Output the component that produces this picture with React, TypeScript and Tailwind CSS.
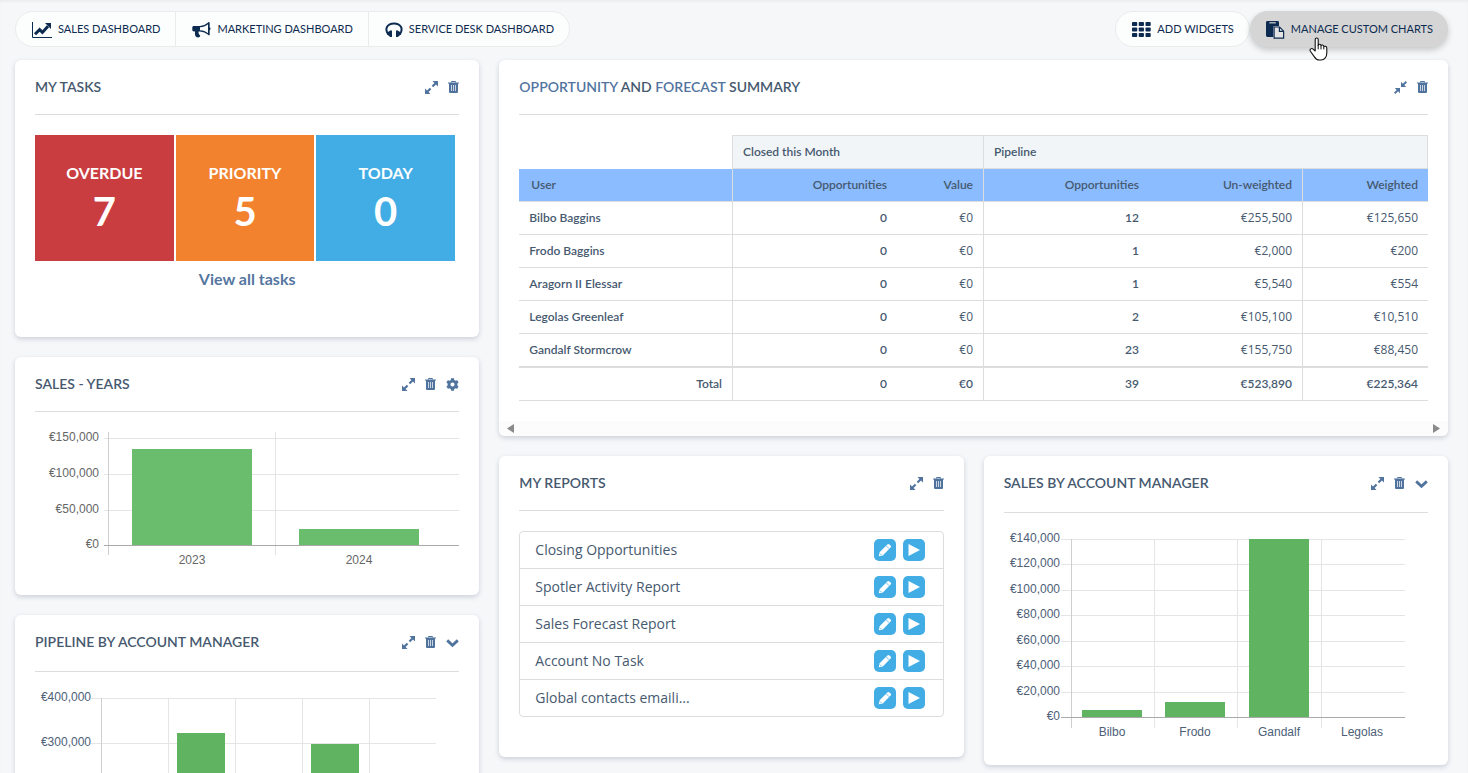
import { ReactNode } from "react"
import { FaCog } from "react-icons/fa"


const users = [
    { name: "Bilbo Baggins", closed: "0", value: "€0", open: "12", unweighted: "€255,500", weighted: "€125,650" },
    { name: "Frodo Baggins", closed: "0", value: "€0", open: "1", unweighted: "€2,000", weighted: "€200" },
    { name: "Aragorn II Elessar", closed: "0", value: "€0", open: "1", unweighted: "€5,540", weighted: "€554" },
    { name: "Legolas Greenleaf", closed: "0", value: "€0", open: "2", unweighted: "€105,100", weighted: "€10,510" },
    { name: "Gandalf Stormcrow", closed: "0", value: "€0", open: "23", unweighted: "€155,750", weighted: "€88,450" },
]

const reports = [
    "Closing Opportunities",
    "Spotler Activity Report",
    "Sales Forecast Report",
    "Account No Task",
    "Global contacts emaili...",
]

const tasks = [
    { label: "OVERDUE", count: 7, color: "bg-[#c93c3f]" },
    { label: "PRIORITY", count: 5, color: "bg-[#f2822e]" },
    { label: "TODAY", count: 0, color: "bg-[#42ade5]" },
]

function LineChartIcon() {
    return (
        <svg width="20" height="16" viewBox="0 0 20 16" fill="none" stroke="currentColor" aria-hidden="true">
            <path d="M.5 0V15.5H20" strokeWidth="1" />
            <path d="M3 12.3L7.6 7.6 10.4 10.4 16 4.2" strokeWidth="3" />
            <path d="M13 1H19V7z" fill="currentColor" stroke="none" />
        </svg>
    )
}

function BullhornIcon() {
    return (
        <svg width="19" height="16" viewBox="0 0 19 16" fill="currentColor" aria-hidden="true">
            <path d="M2 4H8V9.4H6.6C6.2 11 7 12.4 8.2 13.6 8.4 14.8 7.4 15.4 6.2 15.4 4.6 15.4 3.8 15 3.4 13.8 2.8 12 2.8 11 3.2 9.4H2C.8 9.4.3 8.8.3 7.8V5.6C.3 4.6.8 4 2 4z" />
            <path d="M8 4.6C11.4 4.4 14.4 3 16.6 1V12.4C14.4 10.4 11.4 9 8 8.8" fill="none" stroke="currentColor" strokeWidth="1.2" />
            <path d="M16 .4H17.6V5.2C18.8 5.6 18.8 7.8 17.6 8.2V13H16z" />
        </svg>
    )
}

function HeadphonesIcon() {
    return (
        <svg width="18" height="16" viewBox="0 0 18 16" fill="currentColor" aria-hidden="true">
            <path d="M3.2 12.4C-.8 6.8 2.4 1.5 9 1.5S18.8 6.8 14.8 12.4" fill="none" stroke="currentColor" strokeWidth="2" />
            <path d="M5.2 8.6H7V15H5.2L2.2 12.4V10.4z" />
            <path d="M12.8 8.6H11V15H12.8L15.8 12.4V10.4z" />
        </svg>
    )
}

function GridIcon() {
    return (
        <svg width="19" height="15" viewBox="0 0 19 15" fill="currentColor" aria-hidden="true">
            {[0, 5.5, 11].map((y) =>
                [0, 6.75, 13.5].map((x) => <rect key={`${x}-${y}`} x={x} y={y} width="5.2" height="4" rx=".8" />)
            )}
        </svg>
    )
}

function PasteIcon() {
    return (
        <svg width="19" height="18" viewBox="0 0 19 18" aria-hidden="true">
            <path d="M1.4 0H11.6Q13 0 13 1.4V5H8.4Q7.2 5 7.2 6.2V16H1.4Q0 16 0 14.6V1.4Q0 0 1.4 0z" fill="currentColor" />
            <path d="M3.4 1.2H9.8V2.4H3.4z" fill="#d5d5d5" />
            <path d="M8.1 6H13.6L17.6 10.2V17.2H8.1z" fill="#e4e4e4" stroke="currentColor" strokeWidth="1.2" />
            <path d="M13.4 6V10.4H17.6" fill="none" stroke="currentColor" strokeWidth="1.2" />
        </svg>
    )
}

function ExpandIcon() {
    return (
        <svg width="13" height="13" viewBox="0 0 13 13" fill="currentColor" aria-hidden="true">
            <path d="M7.5 0H13V5.5L11 3.6 8.2 6.3 6.7 4.8 9.4 2z" />
            <path d="M5.5 13H0V7.5L2 9.4 4.8 6.7 6.3 8.2 3.6 11z" />
        </svg>
    )
}

function CompressIcon() {
    return (
        <svg width="13" height="13" viewBox="0 0 13 13" fill="currentColor" aria-hidden="true">
            <path d="M7 .8V6H12.2L10.3 4.1 13 1.4 11.6 0 8.9 2.7z" />
            <path d="M6 12.2V7H.8L2.7 8.9 0 11.6 1.4 13 4.1 10.3z" />
        </svg>
    )
}

function TrashIcon() {
    return (
        <svg width="11" height="12" viewBox="0 0 11 12" aria-hidden="true">
            <path d="M3.5 1.5V.5H7.5V1.5" fill="none" stroke="currentColor" />
            <path d="M0 1.4H11V2.6H10V11Q10 12 9 12H2Q1 12 1 11V2.6H0z" fill="currentColor" />
            <path d="M3.5 4V10M5.5 4V10M7.5 4V10" stroke="#fff" strokeWidth="1" opacity=".7" />
        </svg>
    )
}

function ChevronIcon() {
    return (
        <svg width="13" height="13" viewBox="0 0 13 13" fill="none" stroke="currentColor" strokeWidth="2.8" aria-hidden="true">
            <path d="M1.2 4.4L6.5 9.3 11.8 4.4" />
        </svg>
    )
}

function PencilIcon() {
    return (
        <svg width="14" height="14" viewBox="0 0 14 14" fill="currentColor" aria-hidden="true">
            <path d="M.8 13.2L1.6 9.2 9.4 1.4Q10.4.4 11.4 1.4L12.6 2.6Q13.6 3.6 12.6 4.6L4.8 12.4z" />
            <path d="M8.2 2.8L11.2 5.8M2 10.6L3.4 12" stroke="#42ade5" strokeWidth=".8" />
        </svg>
    )
}

function HandCursor() {
    return (
        <svg className="pointer-events-none absolute top-[26px] left-[59px]" width="19" height="24" viewBox="0 0 19 24" aria-hidden="true">
            <path
                d="M6.2 14V2.6C6.2.4 9.2.4 9.2 2.6V8.4C9.4 6.8 12 6.8 12 8.8 12.4 7.6 14.8 7.6 14.8 9.8 15.4 8.8 17.8 9 17.8 11.2V16C17.8 19.8 15.6 23 12 23H10.4C7.8 23 6.4 21.6 5.2 19.6L1.4 14.2C.2 12.2 2.6 10.6 4.2 12.2z"
                fill="#fff"
                stroke="#111"
                strokeWidth="1.1"
                strokeLinejoin="round"
            />
            <path d="M9.2 8V12.4M12 9V12.4M14.8 10V12.4" stroke="#111" strokeWidth="1" />
        </svg>
    )
}

type WidgetProps = {
    title: ReactNode
    icons: ReactNode
    headerClass?: string
    className?: string
    children: ReactNode
}

function Widget({ title, icons, headerClass = "pb-[17px]", className = "", children }: WidgetProps) {
    return (
        <section className={`overflow-hidden rounded-md bg-white shadow-[0_2px_5px_rgba(60,70,100,0.22)] ${className}`}>
            <header className={`mx-5 flex items-center justify-between border-b border-[#dcdddf] pt-[17px] ${headerClass}`}>
                <h2 className="text-sm leading-5 font-semibold text-[#46596f]">{title}</h2>
                <div className="flex items-center gap-2.5 text-[#51749f]">{icons}</div>
            </header>
            {children}
        </section>
    )
}

function IconButton({ label, children }: { label: string; children: ReactNode }) {
    return (
        <button type="button" aria-label={label} className="flex cursor-pointer items-center">
            {children}
        </button>
    )
}

type ChartProps = {
    label: string
    height: number
    className: string
    textColor: string
    barColor: string
    left: number
    right: number
    top: number
    bottom: number
    labelX: number
    ticks: { text: string; y: number }[]
    lines: number[]
    bars: { x: number; y: number; width: number }[]
    baseline: number
    categories?: { text: string; x: number }[]
}

// Bars on a light grid, 424 units wide like the inside of a one column widget
function BarChart(props: ChartProps) {
    const { label, height, className, textColor, barColor, left, right, top, bottom, labelX, ticks, lines, bars, baseline, categories = [] } = props

    return (
        <svg role="img" aria-label={label} viewBox={`0 0 424 ${height}`} preserveAspectRatio="xMinYMin" className={`mx-5 block w-[calc(100%-40px)] font-["Liberation_Sans",sans-serif] text-xs ${className}`}>
            {ticks.map((tick) => (
                <rect key={tick.y} x={left} y={tick.y} width={right - left} height="1" fill="#e5e5e5" />
            ))}
            {lines.map((x, i) => (
                <rect key={x} x={x} y={top} width="1" height={bottom - top} fill={i === 0 ? "#cfcfcf" : "#e5e5e5"} />
            ))}
            {bars.map((bar) => (
                <rect key={bar.x} x={bar.x} y={bar.y} width={bar.width} height={baseline - bar.y} fill={barColor} />
            ))}
            <rect x={left} y={baseline} width={right - left} height="1" fill="#a9a9a9" />
            {ticks.map((tick) => (
                <text key={tick.y} x={labelX} y={tick.y + 3} textAnchor="end" fill={textColor}>{tick.text}</text>
            ))}
            {categories.map((category) => (
                <text key={category.text} x={category.x} y={baseline + 19} textAnchor="middle" fill={textColor}>{category.text}</text>
            ))}
        </svg>
    )
}

function TopBar() {
    const tab = "flex items-center gap-1.5 pt-px pr-[15px] pl-4 cursor-pointer"

    return (
        <div className="flex h-[60px] items-start justify-between pt-[11px] text-[11px] text-[#0d2b50]">
            <nav className="flex h-9 overflow-hidden rounded-full border border-[#e9ecec] bg-[#fcfefd]">
                <button type="button" className={tab}><LineChartIcon />SALES DASHBOARD</button>
                <button type="button" className={`border-l border-[#e9ecec] ${tab}`}><BullhornIcon />MARKETING DASHBOARD</button>
                <button type="button" className={`border-l border-[#e9ecec] ${tab}`}><HeadphonesIcon />SERVICE DESK DASHBOARD</button>
            </nav>
            <div className="flex">
                <button type="button" className={`h-9 rounded-full border border-[#e9ecec] bg-[#fcfefd] ${tab}`}>
                    <GridIcon />ADD WIDGETS
                </button>
                <button type="button" className={`relative h-9 rounded-full bg-[#d5d5d5] shadow-[0_3px_6px_rgba(0,0,0,0.2)] ${tab}`}>
                    <PasteIcon />MANAGE CUSTOM CHARTS
                    <HandCursor />
                </button>
            </div>
        </div>
    )
}

function TasksWidget() {
    return (
        <Widget
            title="MY TASKS"
            className="h-[277px]"
            icons={<>
                <IconButton label="Expand"><ExpandIcon /></IconButton>
                <IconButton label="Delete"><TrashIcon /></IconButton>
            </>}
        >
            <div className="mx-5 mt-5">
                <div className="grid w-[99%] grid-cols-3 gap-0.5">
                    {tasks.map((task) => (
                        <div key={task.label} className={`flex h-[126px] flex-col items-center pt-7 font-bold text-white ${task.color}`}>
                            <p className="text-base leading-5">{task.label}</p>
                            <p className="text-[40px] leading-[56px]">{task.count}</p>
                        </div>
                    ))}
                </div>
                <p className="mt-2 text-center text-base leading-5 font-bold">
                    <a href="#tasks" className="text-[#5576a0]">View all tasks</a>
                </p>
            </div>
        </Widget>
    )
}

function SummaryTable() {
    const line = "border-[#dcdddf]"
    const money = `border-b px-2.5 text-right font-["Open_Sans",sans-serif] ${line}`
    const count = `border-b px-2.5 text-right font-semibold ${line}`

    return (
        <table className="w-full table-fixed border-separate border-spacing-0 text-xs text-[#46596f]">
            <colgroup>
                <col />
                <col className="w-[165px]" />
                <col className="w-[86px]" />
                <col className="w-[166px]" />
                <col className="w-[153px]" />
                <col className="w-[126px]" />
            </colgroup>
            <thead>
                <tr className="h-[34px] text-left">
                    <td></td>
                    <th scope="colgroup" colSpan={2} className={`border-y border-l bg-[#f2f5f8] px-2.5 font-semibold ${line}`}>Closed this Month</th>
                    <th scope="colgroup" colSpan={3} className={`border bg-[#f2f5f8] px-2.5 font-semibold ${line}`}>Pipeline</th>
                </tr>
                <tr className="h-[33px] bg-[#8abcff] text-right">
                    <th scope="col" className={`border-b px-3 text-left font-semibold ${line}`}>User</th>
                    <th scope="col" className={`border-b border-l px-2.5 font-semibold ${line}`}>Opportunities</th>
                    <th scope="col" className={`border-b px-2.5 font-semibold ${line}`}>Value</th>
                    <th scope="col" className={`border-b border-l px-2.5 font-semibold ${line}`}>Opportunities</th>
                    <th scope="col" className={`border-b px-2.5 font-semibold ${line}`}>Un-weighted</th>
                    <th scope="col" className={`border-b border-l px-2.5 font-semibold ${line}`}>Weighted</th>
                </tr>
            </thead>
            <tbody>
                {users.map((user) => (
                    <tr key={user.name} className="h-[33px] last:h-[34px] last:*:border-b-2">
                        <th scope="row" className={`border-b px-2.5 text-left font-semibold ${line}`}>{user.name}</th>
                        <td className={`border-l ${count}`}>{user.closed}</td>
                        <td className={money}>{user.value}</td>
                        <td className={`border-l ${count}`}>{user.open}</td>
                        <td className={money}>{user.unweighted}</td>
                        <td className={`border-l ${money}`}>{user.weighted}</td>
                    </tr>
                ))}
            </tbody>
            <tfoot>
                <tr className="h-[33px]">
                    <th scope="row" className={count}>Total</th>
                    <td className={`border-l ${count}`}>0</td>
                    <td className={count}>€0</td>
                    <td className={`border-l ${count}`}>39</td>
                    <td className={count}>€523,890</td>
                    <td className={`border-l ${count}`}>€225,364</td>
                </tr>
            </tfoot>
        </table>
    )
}

function SummaryWidget() {
    return (
        <Widget
            title={<>
                <a href="#opportunity" className="text-[#51749f]">OPPORTUNITY</a> AND <a href="#forecast" className="text-[#51749f]">FORECAST</a> SUMMARY
            </>}
            className="col-span-2"
            icons={<>
                <IconButton label="Collapse"><CompressIcon /></IconButton>
                <IconButton label="Delete"><TrashIcon /></IconButton>
            </>}
        >
            <div className="px-5 py-5">
                <SummaryTable />
            </div>
            <div className="flex h-[15px] items-center justify-between bg-[#fcfcfc] px-2 text-[#8a8a8a]">
                <button type="button" aria-label="Scroll left">
                    <svg width="7" height="9" viewBox="0 0 7 9" fill="currentColor" className="block"><path d="M7 0V9L0 4.5z" /></svg>
                </button>
                <button type="button" aria-label="Scroll right">
                    <svg width="7" height="9" viewBox="0 0 7 9" fill="currentColor" className="block"><path d="M0 0V9L7 4.5z" /></svg>
                </button>
            </div>
        </Widget>
    )
}

function ReportsWidget() {
    return (
        <Widget
            title="MY REPORTS"
            className="h-[301px]"
            icons={<>
                <IconButton label="Expand"><ExpandIcon /></IconButton>
                <IconButton label="Delete"><TrashIcon /></IconButton>
            </>}
        >
            <ul className="mx-5 mt-5 divide-y divide-[#dcdddf] rounded border border-[#dcdddf]">
                {reports.map((report) => (
                    <li key={report} className="flex h-[37px] items-center gap-[7px] pr-[18px] pl-[15px] last:h-9">
                        <span className='grow font-["Open_Sans",sans-serif] text-sm text-[#46596f]'>{report}</span>
                        <button type="button" aria-label={`Edit ${report}`} className="flex size-[22px] items-center justify-center rounded-[5px] bg-[#42ade5] text-white">
                            <PencilIcon />
                        </button>
                        <button type="button" aria-label={`Run ${report}`} className="flex size-[22px] items-center justify-center rounded-[5px] bg-[#42ade5] text-white">
                            <svg width="12" height="12" viewBox="0 0 12 12" fill="currentColor"><path d="M.5 0L12 6 .5 12z" /></svg>
                        </button>
                    </li>
                ))}
            </ul>
        </Widget>
    )
}

export default function App() {
    const chartIcons = (
        <>
            <IconButton label="Expand"><ExpandIcon /></IconButton>
            <IconButton label="Delete"><TrashIcon /></IconButton>
            <IconButton label="More"><ChevronIcon /></IconButton>
        </>
    )

    return (
        <div className='h-screen overflow-hidden bg-[#f5f7f9] pr-5 pl-[15px] font-["Lato",sans-serif] shadow-[inset_0_2px_2px_rgba(0,0,0,0.04)]'>
            <TopBar />
            <main className="grid grid-cols-3 items-start gap-5">
                <div className="flex flex-col gap-5">
                    <TasksWidget />
                    <Widget
                        title="SALES - YEARS"
                        className="h-[238px]"
                        icons={<>
                            <IconButton label="Expand"><ExpandIcon /></IconButton>
                            <IconButton label="Delete"><TrashIcon /></IconButton>
                            <IconButton label="Settings"><FaCog size={13} /></IconButton>
                        </>}
                    >
                        <BarChart
                            label="Sales by year"
                            height={160}
                            className="h-[160px]"
                            textColor="#666"
                            barColor="#6bbd6e"
                            left={69}
                            right={424}
                            top={20}
                            bottom={143}
                            labelX={64}
                            ticks={[
                                { text: "€150,000", y: 26 },
                                { text: "€100,000", y: 62 },
                                { text: "€50,000", y: 98 },
                                { text: "€0", y: 133 },
                            ]}
                            lines={[73, 240]}
                            bars={[
                                { x: 97, y: 37, width: 120 },
                                { x: 264, y: 117, width: 120 },
                            ]}
                            baseline={133}
                            categories={[{ text: "2023", x: 157 }, { text: "2024", x: 324 }]}
                        />
                    </Widget>
                    <Widget title="PIPELINE BY ACCOUNT MANAGER" headerClass="pb-[19px]" icons={chartIcons}>
                        <BarChart
                            label="Pipeline by account manager"
                            height={220}
                            className="h-[220px]"
                            textColor="#4d6078"
                            barColor="#60b361"
                            left={56}
                            right={401}
                            top={26}
                            bottom={212}
                            labelX={56}
                            ticks={[
                                { text: "€400,000", y: 26 },
                                { text: "€300,000", y: 71 },
                            ]}
                            lines={[66, 133, 200, 267, 334]}
                            bars={[
                                { x: 142, y: 61, width: 48 },
                                { x: 276, y: 72, width: 48 },
                            ]}
                            baseline={204}
                        />
                    </Widget>
                </div>
                <div className="col-span-2 grid grid-cols-2 items-start gap-5">
                    <SummaryWidget />
                    <ReportsWidget />
                    <Widget title="SALES BY ACCOUNT MANAGER" headerClass="pb-[19px]" className="h-[309px]" icons={chartIcons}>
                        <BarChart
                            label="Sales by account manager"
                            height={240}
                            className="h-[240px]"
                            textColor="#4d6078"
                            barColor="#60b361"
                            left={57}
                            right={401}
                            top={26}
                            bottom={215}
                            labelX={56}
                            ticks={[
                                { text: "€140,000", y: 26 },
                                { text: "€120,000", y: 51 },
                                { text: "€100,000", y: 77 },
                                { text: "€80,000", y: 102 },
                                { text: "€60,000", y: 128 },
                                { text: "€40,000", y: 153 },
                                { text: "€20,000", y: 179 },
                                { text: "€0", y: 204 },
                            ]}
                            lines={[67, 150, 233, 317]}
                            bars={[
                                { x: 78, y: 197, width: 60 },
                                { x: 161, y: 189, width: 60 },
                                { x: 245, y: 26, width: 60 },
                            ]}
                            baseline={204}
                            categories={[
                                { text: "Bilbo", x: 108 },
                                { text: "Frodo", x: 191 },
                                { text: "Gandalf", x: 275 },
                                { text: "Legolas", x: 358 },
                            ]}
                        />
                    </Widget>
                </div>
            </main>
        </div>
    )
}
